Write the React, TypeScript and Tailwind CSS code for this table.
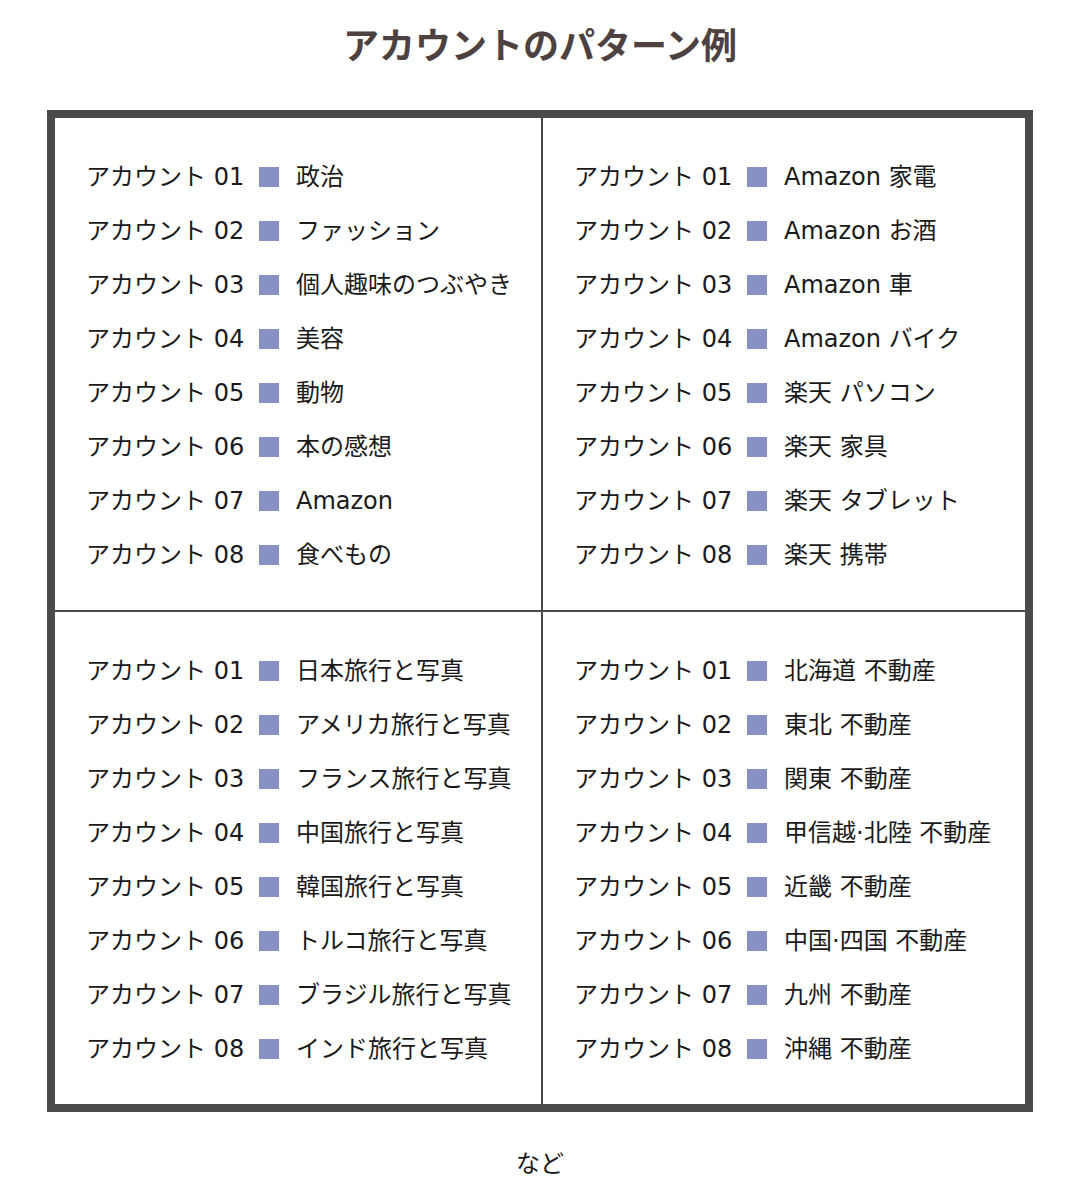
const cells: { label: string }[][] = [
  [
    { label: "政治" },
    { label: "ファッション" },
    { label: "個人趣味のつぶやき" },
    { label: "美容" },
    { label: "動物" },
    { label: "本の感想" },
    { label: "Amazon" },
    { label: "食べもの" },
  ],
  [
    { label: "Amazon 家電" },
    { label: "Amazon お酒" },
    { label: "Amazon 車" },
    { label: "Amazon バイク" },
    { label: "楽天 パソコン" },
    { label: "楽天 家具" },
    { label: "楽天 タブレット" },
    { label: "楽天 携帯" },
  ],
  [
    { label: "日本旅行と写真" },
    { label: "アメリカ旅行と写真" },
    { label: "フランス旅行と写真" },
    { label: "中国旅行と写真" },
    { label: "韓国旅行と写真" },
    { label: "トルコ旅行と写真" },
    { label: "ブラジル旅行と写真" },
    { label: "インド旅行と写真" },
  ],
  [
    { label: "北海道 不動産" },
    { label: "東北 不動産" },
    { label: "関東 不動産" },
    { label: "甲信越·北陸 不動産" },
    { label: "近畿 不動産" },
    { label: "中国·四国 不動産" },
    { label: "九州 不動産" },
    { label: "沖縄 不動産" },
  ],
];

const AccountList = ({ items }: { items: { label: string }[] }) => (
  <ul className="pl-[31px] pt-[32px] pb-[28px]">
    {items.map((item, i) => (
      <li key={i} className="flex h-[54px] items-center">
        <span className="w-[173px] whitespace-nowrap">
          アカウント 0{i + 1}
        </span>
        <span className="h-5 w-5 shrink-0 bg-[#8891c3]" />
        <span className="ml-[17px] whitespace-nowrap">{item.label}</span>
      </li>
    ))}
  </ul>
);

export default function App() {
  return (
    <div
      className="min-h-[1200px] bg-white text-[#1a1a1a]"
      style={{ fontFamily: '"DejaVu Sans", "Noto Sans CJK JP", sans-serif' }}
    >
      <h1 className="pt-[20px] text-center text-[36px] leading-[54px] font-bold text-[#4d4240]">
        アカウントのパターン例
      </h1>

      <div className="mx-[47px] mt-[36px] grid grid-cols-[488px_1fr] border-8 border-[#4a4a4a] text-[24px]">
        <div className="border-r-2 border-b-2 border-[#4a4a4a]">
          <AccountList items={cells[0]} />
        </div>
        <div className="border-b-2 border-[#4a4a4a]">
          <AccountList items={cells[1]} />
        </div>
        <div className="border-r-2 border-[#4a4a4a]">
          <AccountList items={cells[2]} />
        </div>
        <div>
          <AccountList items={cells[3]} />
        </div>
      </div>

      <p className="mt-[34px] text-center text-[24px] leading-[36px]">など</p>
    </div>
  );
}
